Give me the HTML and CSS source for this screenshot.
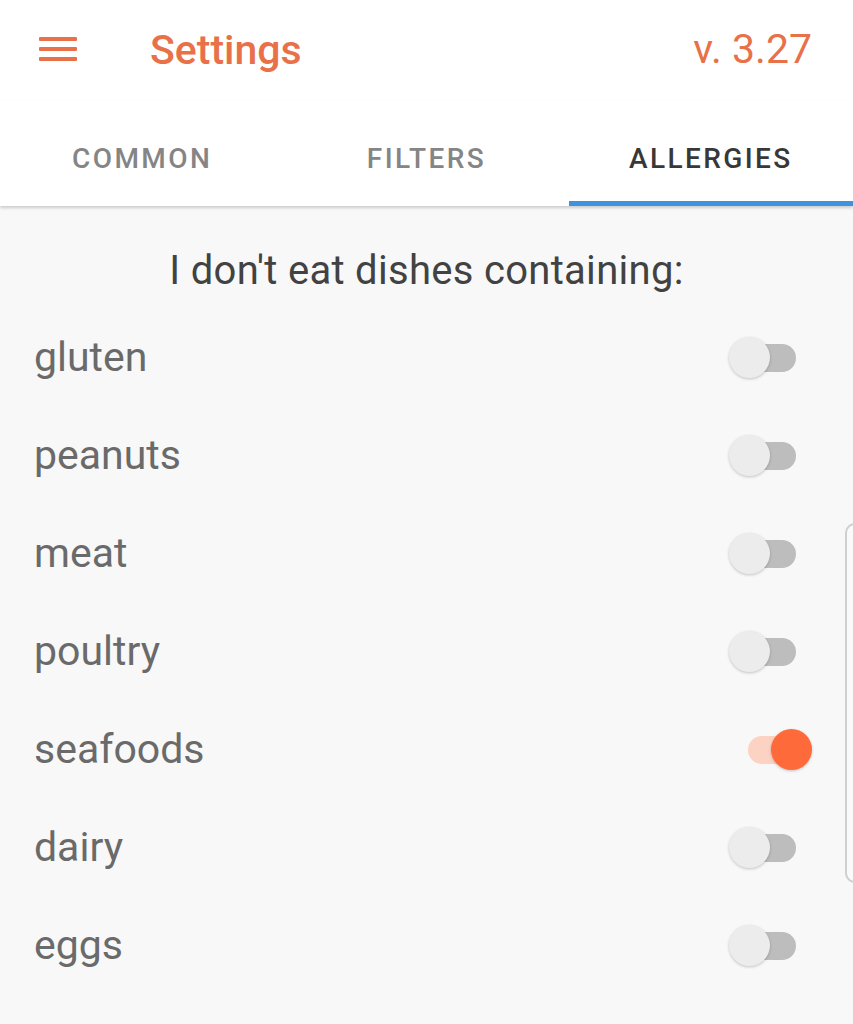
FILE: index.html
```html
<!DOCTYPE html>
<html>
<head>
<meta charset="utf-8">
<link rel="stylesheet" href="styles.css">
</head>
<body>
<div class="app">
  <header class="topbar">
    <div class="menu-btn">
      <svg width="38" height="26" viewBox="0 0 38 26"><rect x="0" y="1" width="38" height="4" rx="1" fill="#e8714a"/><rect x="0" y="11" width="38" height="4" rx="1" fill="#e8714a"/><rect x="0" y="21" width="38" height="4" rx="1" fill="#e8714a"/></svg>
    </div>
    <div class="title">Settings</div>
    <div class="version">v. 3.27</div>
  </header>
  <nav class="tabs">
    <div class="tab">COMMON</div>
    <div class="tab">FILTERS</div>
    <div class="tab active">ALLERGIES</div>
  </nav>
  <main class="content">
    <div class="subtitle">I don't eat dishes containing:</div>
    <ul class="list">
      <li class="row"><span class="label">gluten</span><span class="switch"><span class="track"></span><span class="thumb"></span></span></li>
      <li class="row"><span class="label">peanuts</span><span class="switch"><span class="track"></span><span class="thumb"></span></span></li>
      <li class="row"><span class="label">meat</span><span class="switch"><span class="track"></span><span class="thumb"></span></span></li>
      <li class="row"><span class="label">poultry</span><span class="switch"><span class="track"></span><span class="thumb"></span></span></li>
      <li class="row"><span class="label">seafoods</span><span class="switch on"><span class="track"></span><span class="thumb"></span></span></li>
      <li class="row"><span class="label">dairy</span><span class="switch"><span class="track"></span><span class="thumb"></span></span></li>
      <li class="row"><span class="label">eggs</span><span class="switch"><span class="track"></span><span class="thumb"></span></span></li>
    </ul>
  </main>
  <div class="edge-handle"></div>
</div>
</body>
</html>
```
FILE: styles.css
```css
* { box-sizing: border-box; }
html, body { margin: 0; padding: 0; }
body {
  width: 853px;
  height: 1024px;
  overflow: hidden;
  background: #f8f8f8;
  font-family: Roboto, "Liberation Sans", sans-serif;
}
.app { position: relative; height: 1024px; }
.topbar {
  height: 100px;
  background: #fff;
  display: flex;
  align-items: center;
  padding: 0 41px 0 39px;
  color: #e8714a;
}
.menu-btn { width: 38px; height: 26px; margin-top: -2px; }
.menu-btn svg { display: block; }
.title {
  margin-left: 73px;
  font-size: 41px;
  font-weight: 500;
  margin-top: 0;
}
.version {
  margin-left: auto;
  font-size: 41px;
  font-weight: 400;
  margin-top: -3px;
}
.tabs {
  height: 106px;
  background: #fff;
  display: grid;
  grid-template-columns: repeat(3, 1fr);
  box-shadow: 0 2px 3px rgba(0,0,0,0.18);
  position: relative;
  z-index: 1;
}
.tab {
  display: flex;
  align-items: center;
  justify-content: center;
  padding-top: 15px;
  font-size: 28px;
  font-weight: 500;
  letter-spacing: 2.4px;
  color: #858585;
  border-bottom: 5px solid transparent;
}
.tab.active {
  color: #383838;
  border-bottom-color: #3d93e0;
}
.subtitle {
  height: 103px;
  display: flex;
  align-items: center;
  justify-content: center;
  padding-top: 25px;
  font-size: 40px;
  letter-spacing: 0.3px;
  color: #424242;
}
.list { list-style: none; margin: 0; padding: 0; }
.row {
  height: 98px;
  display: flex;
  align-items: center;
  padding: 0 53px 0 34px;
}
.label {
  font-size: 41px;
  color: #6a6a6a;
  margin-top: -2px;
}
.switch {
  margin-left: auto;
  position: relative;
  width: 72px;
  height: 42px;
}
.track {
  position: absolute;
  left: 12px;
  right: 4px;
  top: 7px;
  height: 28px;
  border-radius: 14px;
  background: #bdbdbd;
}
.thumb {
  position: absolute;
  left: 1px;
  top: 0;
  width: 41px;
  height: 41px;
  border-radius: 50%;
  background: #ececec;
  box-shadow: 0 1px 3px rgba(0,0,0,0.22);
}
.switch.on .track { background: #fcd2c3; left: 20px; right: 0; }
.switch.on .thumb { left: auto; right: -12px; background: #ff6a3a; }
.edge-handle {
  position: absolute;
  left: 845px;
  top: 523px;
  width: 30px;
  height: 360px;
  border: 2px solid #cfcfcf;
  border-radius: 10px;
  background: #fafafa;
}
```
